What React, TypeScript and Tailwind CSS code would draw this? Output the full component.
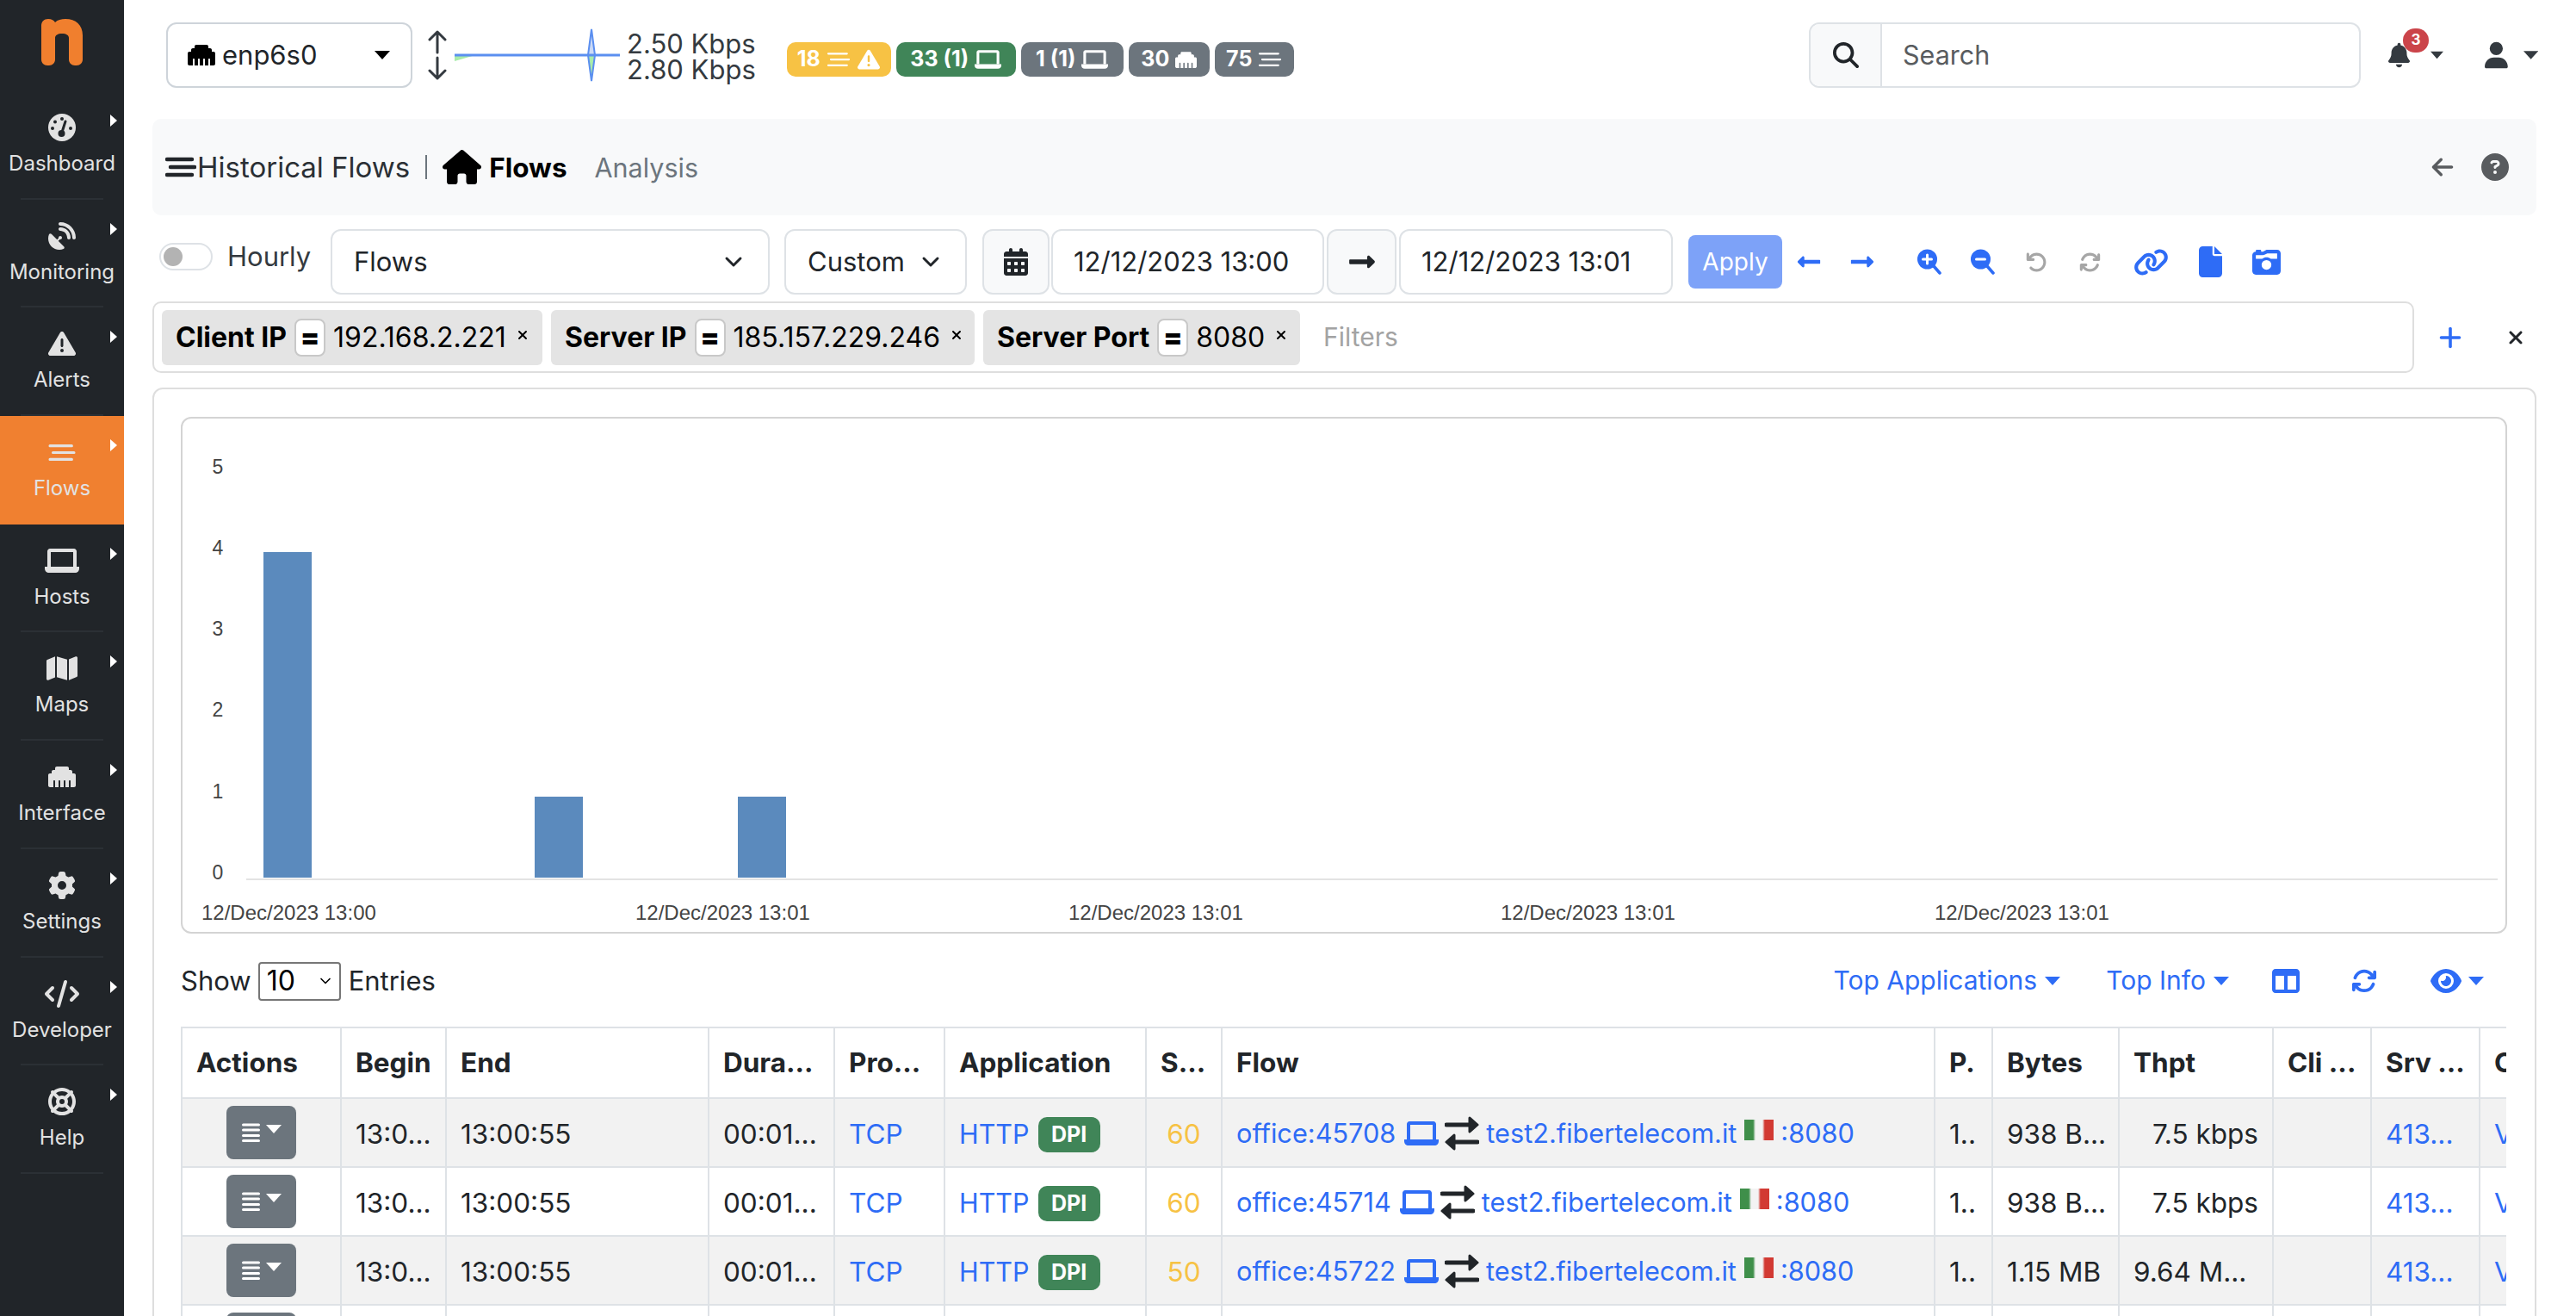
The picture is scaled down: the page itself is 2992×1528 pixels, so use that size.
import React from "react";
import {
  FaArrowLeft,
  FaArrowRotateLeft,
  FaArrowsRotate,
  FaBell,
  FaCalendarDays,
  FaCameraRetro,
  FaCircleQuestion,
  FaCode,
  FaEthernet,
  FaEye,
  FaFile,
  FaGear,
  FaHouse,
  FaLifeRing,
  FaLink,
  FaMagnifyingGlass,
  FaMap,
  FaSatelliteDish,
  FaTableColumns,
  FaTriangleExclamation,
  FaUser,
  FaXmark,
} from "react-icons/fa6";
import { FaLongArrowAltLeft, FaLongArrowAltRight } from "react-icons/fa";
import { ChevronDown, Plus } from "lucide-react";

type IconProps = { className?: string };

const Caret = ({ className }: IconProps) => (
  <svg viewBox="0 0 18 10" className={`h-[10px] w-[18px] ${className ?? ""}`} fill="currentColor">
    <path d="M0 0H18L9 10Z" />
  </svg>
);

const BarsIcon = ({ className, weight = 3.5 }: IconProps & { weight?: number }) => (
  <svg viewBox="0 0 36 24" className={className} fill="none" stroke="currentColor" strokeWidth={weight} strokeLinecap="round">
    <path d="M2 3H31M6 12H34M2 21H31" />
  </svg>
);

const LaptopIcon = ({ className }: IconProps) => (
  <svg viewBox="0 0 40 28" className={className} fill="currentColor">
    <path d="M6 0H34C35.5 0 37 1.5 37 3V21H33V4H7V21H3V3C3 1.5 4.5 0 6 0Z" />
    <path d="M0 21H40V23C40 26 38 28 35 28H5C2 28 0 26 0 23Z" />
  </svg>
);

const GaugeIcon = ({ className }: IconProps) => (
  <svg viewBox="0 0 32 32" className={className}>
    <circle cx="16" cy="16" r="16" fill="currentColor" />
    <g fill="#212529">
      <circle cx="16" cy="6" r="2" />
      <circle cx="8" cy="9.5" r="2" />
      <circle cx="5" cy="17" r="2" />
      <circle cx="26" cy="17" r="2" />
      <circle cx="15.5" cy="23" r="4" />
    </g>
    <path d="M15.5 23L20 9" stroke="#212529" strokeWidth="3" strokeLinecap="round" />
  </svg>
);

const ExchangeIcon = ({ className }: IconProps) => (
  <svg viewBox="0 0 40 40" className={className} fill="currentColor" stroke="currentColor" strokeLinejoin="round" strokeLinecap="round">
    <path d="M2 10H32" strokeWidth="5" />
    <path d="M29 2L38 10L29 18Z" strokeWidth="3" />
    <path d="M38 30H8" strokeWidth="5" />
    <path d="M11 22L2 30L11 38Z" strokeWidth="3" />
  </svg>
);

const MagIcon = ({ minus }: { minus?: boolean }) => (
  <svg viewBox="0 0 28 30" className="h-[30px] w-[28px]">
    <circle cx="11.5" cy="12" r="11.5" fill="currentColor" />
    <path d="M19 20L26 28" stroke="currentColor" strokeWidth="3.5" strokeLinecap="round" />
    <path d={minus ? "M6.5 12H16.5" : "M6.5 12H16.5M11.5 7V17"} stroke="#fff" strokeWidth="3" strokeLinecap="round" />
  </svg>
);

const navItems = [
  { label: "Dashboard", icon: <GaugeIcon className="h-[32px] w-[32px]" /> },
  { label: "Monitoring", icon: <FaSatelliteDish className="h-[32px] w-[32px]" /> },
  { label: "Alerts", icon: <FaTriangleExclamation className="h-[32px] w-[32px]" /> },
  { label: "Flows", icon: <BarsIcon className="h-[21px] w-[32px]" weight={3.5} />, active: true },
  { label: "Hosts", icon: <LaptopIcon className="h-[28px] w-[40px]" /> },
  { label: "Maps", icon: <FaMap className="h-[32px] w-[36px]" /> },
  { label: "Interface", icon: <FaEthernet className="h-[32px] w-[32px]" /> },
  { label: "Settings", icon: <FaGear className="h-[32px] w-[32px]" /> },
  { label: "Developer", icon: <FaCode className="h-[32px] w-[40px]" /> },
  { label: "Help", icon: <FaLifeRing className="h-[32px] w-[32px]" /> },
];

const Sidebar = () => (
  <aside className="w-[144px] shrink-0 bg-[#212529] text-[#e2e2e2]">
    <div className="h-[106px] pl-[48px] pt-[22px]">
      <svg width="48" height="54" viewBox="0 0 48 54">
        <path
          d="M8 0C12 0 15 2 16 4C19 1 23 0 28 0C40 0 48 7 48 19V47C48 51 45 54 41 54H39C35 54 32 51 32 47V22C32 19 29 17 24 17C19 17 16 19 16 22V47C16 51 13 54 9 54H7C3 54 0 51 0 47V8C0 3 3 0 8 0Z"
          fill="#f07f2e"
        />
      </svg>
    </div>
    {navItems.map((item) => (
      <div
        key={item.label}
        className={`relative flex h-[125.7px] flex-col items-center pt-[24px] ${item.active ? "bg-[#f08030]" : ""}`}
      >
        <div className="flex h-[36px] items-center justify-center">{item.icon}</div>
        <span className="mt-[8px] text-[24px] leading-[32px]">{item.label}</span>
        <svg viewBox="0 0 8 14" className="absolute left-[128px] top-[27px] h-[14px] w-[8px] text-white" fill="currentColor">
          <path d="M0 0L8 7L0 14Z" />
        </svg>
        {!item.active && <div className="absolute bottom-0 left-[24px] h-[2px] w-[96px] bg-[#2b3035]" />}
      </div>
    ))}
  </aside>
);

const Sparkline = () => (
  <svg width="192" height="62" viewBox="0 0 192 62" className="ml-[8px]">
    <path d="M0 31H24L0 38Z" fill="#a8ecaa" />
    <path d="M155 31L159 1L163 31Z" fill="#cbdaf6" stroke="#5b8ff0" strokeWidth="2" />
    <path d="M155 31L159 61L163 31Z" fill="#a8ecaa" stroke="#5b8ff0" strokeWidth="2" />
    <path d="M0 31H192" stroke="#5b8ff0" strokeWidth="3" fill="none" />
  </svg>
);

const badges = [
  { text: "18", bg: "bg-[#f7c244]", w: "w-[121px]", icons: [<BarsIcon key="a" className="h-[18px] w-[28px]" weight={3} />, <FaTriangleExclamation key="b" className="h-[26px] w-[28px]" />] },
  { text: "33 (1)", bg: "bg-[#408558]", w: "w-[139px]", icons: [<LaptopIcon key="a" className="h-[22px] w-[31px]" />] },
  { text: "1 (1)", bg: "bg-[#6c757d]", w: "w-[119px]", icons: [<LaptopIcon key="a" className="h-[22px] w-[31px]" />] },
  { text: "30", bg: "bg-[#6c757d]", w: "w-[94px]", icons: [<FaEthernet key="a" className="h-[25px] w-[25px]" />] },
  { text: "75", bg: "bg-[#6c757d]", w: "w-[92px]", icons: [<BarsIcon key="a" className="h-[18px] w-[28px]" weight={3} />] },
];

const TopBar = () => (
  <div className="flex h-[76px] items-center pl-[16px]">
    <div className="flex h-[76px] w-[286px] items-center rounded-[12px] border-2 border-[#ced4da] pl-[23px] pr-[24px] text-[31px] text-[#212529]">
      <FaEthernet className="h-[32px] w-[32px] text-black" />
      <span className="ml-[8px]">enp6s0</span>
      <Caret className="ml-auto text-black" />
    </div>
    <svg viewBox="0 0 24 58" className="ml-[17px] h-[58px] w-[24px] text-[#343a40]" fill="none" stroke="currentColor" strokeWidth="3" strokeLinecap="round" strokeLinejoin="round">
      <path d="M12 2V26M3 11L12 2L21 11M12 32V56M3 47L12 56L21 47" />
    </svg>
    <Sparkline />
    <div className="ml-[8px] mt-[4px] text-[31px] leading-[30px] text-[#343a40]">
      <div>2.50 Kbps</div>
      <div>2.80 Kbps</div>
    </div>
    <div className="ml-[36px] mt-[10px] flex gap-[6px]">
      {badges.map((b) => (
        <div
          key={b.text}
          className={`flex h-[40px] items-center justify-center gap-[7px] rounded-[10px] text-[25px] font-bold text-white ${b.bg} ${b.w}`}
        >
          <span>{b.text}</span>
          {b.icons}
        </div>
      ))}
    </div>
    <div className="ml-auto flex h-[76px] w-[641px] overflow-hidden rounded-[12px] border-2 border-[#dee2e6]">
      <div className="flex w-[83px] items-center justify-center border-r-2 border-[#dee2e6] bg-[#f8f9fa]">
        <FaMagnifyingGlass className="h-[30px] w-[30px] text-[#212529]" />
      </div>
      <div className="flex items-center pl-[24px] text-[30.5px] text-[#595c5f]">Search</div>
    </div>
    <div className="relative ml-[32px] flex w-[64px] items-center">
      <FaBell className="h-[34px] w-[30px] text-[#343a40]" />
      <span className="absolute left-[17px] top-[-14px] flex h-[28px] w-[30px] items-center justify-center rounded-full bg-[#cb444a] text-[17px] font-bold text-white">
        3
      </span>
      <Caret className="ml-[24px] text-[#343a40]" />
    </div>
    <div className="ml-[48px] mr-[-2px] flex w-[62px] items-center">
      <FaUser className="h-[32px] w-[28px] text-[#343a40]" />
      <Caret className="ml-[18px] text-[#343a40]" />
    </div>
  </div>
);

const Breadcrumb = () => (
  <div className="mt-[36px] flex h-[112px] items-center rounded-[10px] bg-[#f8f9fa] pl-[15px] pr-[32px]">
    <BarsIcon className="h-[24px] w-[36px] text-[#212529]" weight={4.5} />
    <span className="ml-[1px] mt-[2px] text-[33px] text-[#2b3035]">Historical Flows</span>
    <div className="ml-[18px] h-[28px] w-[2px] bg-[#6c757d]" />
    <FaHouse className="ml-[18px] h-[40px] w-[45px] text-black" />
    <span className="ml-[9px] mt-[2px] text-[31.5px] font-bold text-black">Flows</span>
    <span className="ml-[32px] mt-[2px] text-[30.5px] text-[#6c757d]">Analysis</span>
    <FaArrowLeft className="ml-auto h-[28px] w-[28px] text-[#595c5f]" />
    <FaCircleQuestion className="ml-[31px] h-[32px] w-[32px] text-[#595c5f]" />
  </div>
);

const Field = ({ children, className }: { children: React.ReactNode; className: string }) => (
  <div className={`flex h-[76px] items-center rounded-[12px] border-2 border-[#dee2e6] text-[31px] text-[#212529] ${className}`}>
    {children}
  </div>
);

const toolIcons = [
  { icon: <FaLongArrowAltLeft className="h-[30px] w-[30px]" />, className: "w-[62px] text-[#2e6cf6]" },
  { icon: <FaLongArrowAltRight className="h-[30px] w-[30px]" />, className: "w-[62px] text-[#2e6cf6]" },
  { icon: <MagIcon />, className: "ml-[16px] w-[62px] text-[#2e6cf6]" },
  { icon: <MagIcon minus />, className: "w-[62px] text-[#2e6cf6]" },
  { icon: <FaArrowRotateLeft className="h-[25px] w-[25px]" />, className: "w-[62px] text-[#a6a6a6]" },
  { icon: <FaArrowsRotate className="h-[25px] w-[25px]" />, className: "w-[62px] text-[#a6a6a6]" },
  { icon: <FaLink className="h-[33px] w-[41px]" />, className: "ml-[9px] w-[62px] text-[#2e6cf6]" },
  { icon: <FaFile className="h-[36px] w-[27px]" />, className: "ml-[5px] w-[67px] text-[#2e6cf6]" },
  { icon: <FaCameraRetro className="h-[33px] w-[35px]" />, className: "w-[62px] text-[#2e6cf6]" },
];

const Controls = () => (
  <div className="mt-[16px] flex h-[76px] items-start">
    <div className="ml-[8px] mt-[16px] flex h-[32px] w-[62px] items-center rounded-full border-2 border-[#dee2e6] pl-[3px]">
      <div className="h-[22px] w-[22px] rounded-full bg-[#b3b3b3]" />
    </div>
    <span className="ml-[17px] mt-[12px] w-[95px] text-[31px] leading-[40px] text-[#343a40]">Hourly</span>
    <Field className="ml-[25px] w-[510px] justify-between pl-[25px] pr-[24px]">
      <span>Flows</span>
      <ChevronDown className="h-[32px] w-[32px]" strokeWidth={2.2} />
    </Field>
    <Field className="ml-[17px] w-[212px] justify-between border-[#ced4da] pl-[25px] pr-[24px]">
      <span>Custom</span>
      <ChevronDown className="h-[32px] w-[32px]" strokeWidth={2.2} />
    </Field>
    <Field className="ml-[18px] w-[78px] justify-center bg-[#f8f9fa]">
      <FaCalendarDays className="h-[32px] w-[32px] text-[#212529]" />
    </Field>
    <Field className="ml-[2px] w-[317px] pl-[24px]">12/12/2023 13:00</Field>
    <Field className="ml-[3px] w-[81px] justify-center bg-[#f8f9fa]">
      <FaLongArrowAltRight className="h-[34px] w-[34px] text-[#212529]" />
    </Field>
    <Field className="ml-[3px] w-[318px] pl-[24px]">12/12/2023 13:01</Field>
    <div className="ml-[18px] mt-[7px] flex h-[62px] w-[109px] items-center justify-center rounded-[8px] bg-[#7da2f8] text-[28px] text-white">
      Apply
    </div>
    <div className="mt-[20px] flex h-[36px] items-center">
      {toolIcons.map(({ icon, className }, i) => (
        <div key={i} className={`flex justify-center ${className}`}>
          {icon}
        </div>
      ))}
    </div>
  </div>
);

const filters = [
  { label: "Client IP", value: "192.168.2.221", w: "w-[442px]" },
  { label: "Server IP", value: "185.157.229.246", w: "w-[492px]" },
  { label: "Server Port", value: "8080", w: "w-[368px]" },
];

const FilterBar = () => (
  <div className="mt-[8px] flex h-[83px] items-center">
    <div className="flex h-[83px] w-[2627px] items-center rounded-[10px] border-2 border-[#dedede] pl-[9px] text-[32px]">
      <div className="flex gap-[10px]">
        {filters.map((f) => (
          <div key={f.label} className={`flex h-[64px] items-center rounded-[6px] bg-[#e4e4e4] pl-[16px] text-black ${f.w}`}>
            <span className="font-bold">{f.label}</span>
            <span className="ml-[9px] flex h-[44px] w-[36px] items-center justify-center rounded-[8px] border-2 border-[#c8c8c8] bg-white font-black">
              =
            </span>
            <span className="ml-[9px]">{f.value}</span>
            <FaXmark className="ml-[12px] mt-[-6px] h-[16px] w-[14px]" />
          </div>
        ))}
      </div>
      <span className="ml-[27px] text-[30px] text-[#a3a3a3]">Filters</span>
    </div>
    <Plus className="ml-[24px] h-[36px] w-[36px] text-[#2e6cf6]" strokeWidth={2.4} />
    <FaXmark className="ml-[47px] h-[24px] w-[22px] text-[#212529]" />
  </div>
);

const Chart = () => {
  const yTicks = [
    { label: "5", y: 58 },
    { label: "4", y: 152 },
    { label: "3", y: 246 },
    { label: "2", y: 340 },
    { label: "1", y: 435 },
    { label: "0", y: 529 },
  ];
  const xTicks = [22, 526, 1029, 1531, 2035];
  return (
    <div className="h-[600px] rounded-[12px] border-2 border-[#d4d4d4]">
      <svg width="2696" height="596" viewBox="0 0 2696 596" fontFamily="'Liberation Sans', Arial, sans-serif" fontSize="24" fill="#444">
        {yTicks.map((t) => (
          <text key={t.label} x="41" y={t.y} textAnchor="middle" dominantBaseline="middle" fontSize="23">
            {t.label}
          </text>
        ))}
        <rect x="94" y="155" width="56" height="378" fill="#5b8abd" />
        <rect x="409" y="439" width="56" height="94" fill="#5b8abd" />
        <rect x="645" y="439" width="56" height="94" fill="#5b8abd" />
        <rect x="74" y="534" width="2615" height="2" fill="#e3e3e3" />
        {xTicks.map((x) => (
          <text key={x} x={x} y="582">
            12/Dec/2023 13:0{x === 22 ? "0" : "1"}
          </text>
        ))}
      </svg>
    </div>
  );
};

const columns = [
  { label: "Actions", w: "w-[185px]" },
  { label: "Begin", w: "w-[122px]" },
  { label: "End", w: "w-[305px]" },
  { label: "Dura...", w: "w-[146px]" },
  { label: "Pro...", w: "w-[128px]" },
  { label: "Application", w: "w-[234px]" },
  { label: "S...", w: "w-[88px]" },
  { label: "Flow", w: "w-[828px]" },
  { label: "P.", w: "w-[67px]" },
  { label: "Bytes", w: "w-[147px]" },
  { label: "Thpt", w: "w-[179px]" },
  { label: "Cli ...", w: "w-[114px]" },
  { label: "Srv ...", w: "w-[126px]" },
  { label: "C", w: "w-[60px]" },
];

const rows = [
  { score: "60", port: "45708", bytes: "938 B...", thpt: "7.5 kbps", right: true },
  { score: "60", port: "45714", bytes: "938 B...", thpt: "7.5 kbps", right: true },
  { score: "50", port: "45722", bytes: "1.15 MB", thpt: "9.64 M...", right: false },
];

const ItalyFlag = () => (
  <div className="mb-[8px] ml-[9px] flex h-[24px] w-[34px] bg-[linear-gradient(90deg,#3f8f4a_0%,#3f8f4a_30%,#f3f3f3_38%,#f3f3f3_62%,#d23a33_70%,#d23a33_100%)]" />
);

const cell = "border-2 border-[#dee2e6] px-[16px] py-0 overflow-hidden whitespace-nowrap";
const textCell = `${cell} pt-[3px]`;

const FlowTable = () => (
  <div className="w-[2701px] overflow-hidden">
    <table className="w-[2729px] table-fixed border-collapse text-left text-[31.5px] text-[#212529]">
      <colgroup>
        {columns.map((c) => (
          <col key={c.label} className={c.w} />
        ))}
      </colgroup>
      <thead>
        <tr className="h-[82px]">
          {columns.map((c) => (
            <th key={c.label} className={`${cell} font-bold`}>
              {c.label}
            </th>
          ))}
        </tr>
      </thead>
      <tbody>
        {rows.map((r, i) => (
          <tr key={i} className={`h-[80px] ${i % 2 === 0 ? "bg-[#f2f2f2]" : "bg-white"}`}>
            <td className={cell}>
              <div className="mx-auto flex h-[62px] w-[81px] items-center justify-center gap-[7px] rounded-[8px] bg-[#6c757d] text-white">
                <svg viewBox="0 0 21 22" className="h-[22px] w-[21px]" fill="none" stroke="currentColor" strokeWidth="3" strokeLinecap="round">
                  <path d="M1.5 2H19.5M1.5 8H19.5M1.5 14.5H19.5M1.5 20.5H19.5" />
                </svg>
                <Caret className="mt-[-8px]" />
              </div>
            </td>
            <td className={textCell}>13:0...</td>
            <td className={textCell}>13:00:55</td>
            <td className={textCell}>00:01...</td>
            <td className={`${textCell} text-[#2e6cf6]`}>TCP</td>
            <td className={textCell}>
              <div className="flex items-center">
                <span className="text-[30.5px] text-[#2e6cf6]">HTTP</span>
                <span className="ml-[10px] mt-[2px] flex h-[41px] w-[72px] items-center justify-center rounded-[10px] bg-[#408558] text-[25px] font-bold text-white">
                  DPI
                </span>
              </div>
            </td>
            <td className={`${textCell} text-center text-[#f7c244]`}>{r.score}</td>
            <td className={`${textCell} text-[#2e6cf6]`}>
              <div className="flex items-center text-[30.7px]">
                <span>office:{r.port}</span>
                <LaptopIcon className="ml-[10px] h-[28px] w-[40px]" />
                <ExchangeIcon className="ml-[7px] h-[40px] w-[40px] text-[#212529]" />
                <span className="ml-[8px]">test2.fibertelecom.it</span>
                <ItalyFlag />
                <span className="ml-[8px]">:8080</span>
              </div>
            </td>
            <td className={textCell}>1..</td>
            <td className={textCell}>{r.bytes}</td>
            <td className={`${textCell} ${r.right ? "text-right" : ""}`}>{r.thpt}</td>
            <td className={textCell} />
            <td className={`${textCell} text-[#2e6cf6]`}>413...</td>
            <td className={`${textCell} text-[#2e6cf6]`}>V</td>
          </tr>
        ))}
        <tr className="h-[80px]">
          {columns.map((c, i) => (
            <td key={c.label} className={`${cell} align-top`}>
              {i === 0 && <div className="mx-auto mt-[8px] h-[62px] w-[81px] rounded-[8px] bg-[#6c757d]" />}
            </td>
          ))}
        </tr>
      </tbody>
    </table>
  </div>
);

const TableToolbar = () => (
  <div className="mt-[32px] flex h-[76px] items-start text-[31px] text-[#212529]">
    <div className="flex items-center">
      <span>Show</span>
      <div className="ml-[8px] flex h-[45px] w-[96px] items-center justify-between rounded-[4px] border-2 border-[#767676] pl-[8px] pr-[6px] text-[32px] text-black">
        10
        <ChevronDown className="h-[20px] w-[20px]" />
      </div>
      <span className="ml-[9px]">Entries</span>
    </div>
    <div className="ml-auto flex items-center pr-[27px] text-[30px] text-[#2e6cf6]">
      <span>Top Applications</span>
      <Caret className="ml-[9px]" />
      <span className="ml-[53px]">Top Info</span>
      <Caret className="ml-[9px]" />
      <FaTableColumns className="ml-[50px] h-[32px] w-[32px]" />
      <FaArrowsRotate className="ml-[60px] h-[30px] w-[30px]" />
      <FaEye className="ml-[62px] h-[32px] w-[36px]" />
      <Caret className="ml-[8px]" />
    </div>
  </div>
);

export default function App() {
  return (
    <div className="flex h-[1528px] overflow-hidden bg-white font-['Inter',sans-serif]">
      <Sidebar />
      <main className="min-w-0 flex-1 pl-[33px] pr-[46px] pt-[26px]">
        <TopBar />
        <Breadcrumb />
        <Controls />
        <FilterBar />
        <section className="mt-[17px] rounded-[12px] rounded-b-none border-2 border-[#dedede] pl-[31px] pr-[32px] pt-[32px]">
          <Chart />
          <TableToolbar />
          <FlowTable />
        </section>
      </main>
    </div>
  );
}
